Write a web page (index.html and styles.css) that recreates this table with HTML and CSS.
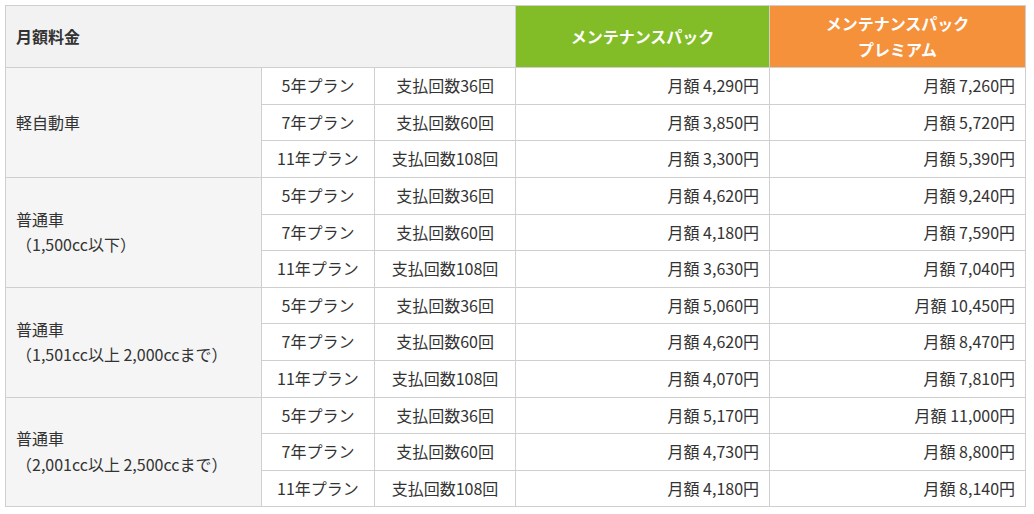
FILE: index.html
```html
<!DOCTYPE html>
<html lang="ja">
<head>
<meta charset="utf-8">
<link rel="stylesheet" href="styles.css">
</head>
<body>
<table class="price-table">
  <colgroup>
    <col class="c-car"><col class="c-plan"><col class="c-pay"><col class="c-pack"><col class="c-prem">
  </colgroup>
  <thead>
    <tr>
      <th colspan="3" class="h-label">月額料金</th>
      <th class="h-pack">メンテナンスパック</th>
      <th class="h-prem">メンテナンスパック<br>プレミアム</th>
    </tr>
  </thead>
  <tbody>
    <tr><th rowspan="3" class="car">軽自動車</th><td class="plan">5年プラン</td><td class="pay">支払回数36回</td><td class="price">月額 4,290円</td><td class="price">月額 7,260円</td></tr>
    <tr><td class="plan">7年プラン</td><td class="pay">支払回数60回</td><td class="price">月額 3,850円</td><td class="price">月額 5,720円</td></tr>
    <tr><td class="plan">11年プラン</td><td class="pay">支払回数108回</td><td class="price">月額 3,300円</td><td class="price">月額 5,390円</td></tr>

    <tr><th rowspan="3" class="car">普通車<br>（1,500cc以下）</th><td class="plan">5年プラン</td><td class="pay">支払回数36回</td><td class="price">月額 4,620円</td><td class="price">月額 9,240円</td></tr>
    <tr><td class="plan">7年プラン</td><td class="pay">支払回数60回</td><td class="price">月額 4,180円</td><td class="price">月額 7,590円</td></tr>
    <tr><td class="plan">11年プラン</td><td class="pay">支払回数108回</td><td class="price">月額 3,630円</td><td class="price">月額 7,040円</td></tr>

    <tr><th rowspan="3" class="car">普通車<br>（1,501cc以上 2,000ccまで）</th><td class="plan">5年プラン</td><td class="pay">支払回数36回</td><td class="price">月額 5,060円</td><td class="price">月額 10,450円</td></tr>
    <tr><td class="plan">7年プラン</td><td class="pay">支払回数60回</td><td class="price">月額 4,620円</td><td class="price">月額 8,470円</td></tr>
    <tr><td class="plan">11年プラン</td><td class="pay">支払回数108回</td><td class="price">月額 4,070円</td><td class="price">月額 7,810円</td></tr>

    <tr><th rowspan="3" class="car">普通車<br>（2,001cc以上 2,500ccまで）</th><td class="plan">5年プラン</td><td class="pay">支払回数36回</td><td class="price">月額 5,170円</td><td class="price">月額 11,000円</td></tr>
    <tr><td class="plan">7年プラン</td><td class="pay">支払回数60回</td><td class="price">月額 4,730円</td><td class="price">月額 8,800円</td></tr>
    <tr><td class="plan">11年プラン</td><td class="pay">支払回数108回</td><td class="price">月額 4,180円</td><td class="price">月額 8,140円</td></tr>
  </tbody>
</table>
</body>
</html>
```

FILE: styles.css
```css
html, body {
  margin: 0;
  padding: 0;
  background: #fff;
}
body {
  padding: 5px;
  font-family: "Noto Sans CJK JP", "Noto Sans", sans-serif;
  font-size: 16px;
  line-height: 1.6;
  color: #333;
}
.price-table {
  width: 1020px;
  border-collapse: collapse;
  table-layout: fixed;
}
.c-car { width: 256px; }
.c-plan { width: 113px; }
.c-pay { width: 141px; }
.c-pack { width: 254px; }
.c-prem { width: 256px; }

.price-table th,
.price-table td {
  border: 1px solid #cfcfcf;
  padding: 5px 10px;
  font-weight: normal;
  vertical-align: middle;
}
.h-label {
  background: #f2f2f2;
  text-align: left;
  font-weight: bold !important;
}
.h-pack,
.h-prem {
  color: #fff;
  text-align: center;
  font-weight: bold !important;
}
.h-pack { background: #82bd27; }
.h-prem { background: #f5903b; }

.car {
  background: #f5f5f5;
  text-align: left;
}
.plan, .pay { text-align: center; }
.price { text-align: right; }
```
